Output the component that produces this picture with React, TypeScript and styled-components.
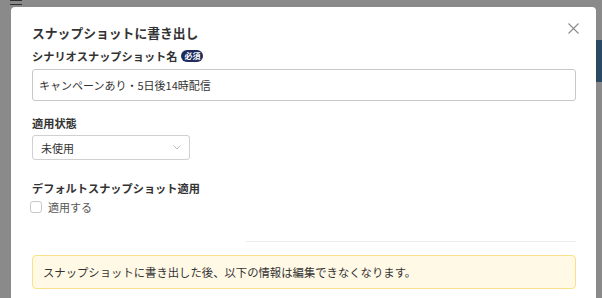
import styled, { createGlobalStyle } from "styled-components";

const GlobalStyle = createGlobalStyle`
  html, body {
    margin: 0;
    padding: 0;
    width: 100%;
    height: 100%;
    overflow: hidden;
  }
  body {
    font-family: "Noto Sans CJK JP", "Noto Sans", sans-serif;
    background: #ffffff;
    color: #333;
  }
`;

const Page = styled.div`
  width: 602px;
  height: 298px;
  display: flex;
  flex-direction: column;
  background: #ffffff;
`;

const TopBar = styled.div`
  height: 40px;
  display: flex;
  align-items: flex-start;
  padding-left: 10px;
`;

const PageRow = styled.div`
  display: flex;
  justify-content: flex-end;
`;

const PageButton = styled.div`
  width: 6px;
  height: 42px;
  background: #5187b7;
`;

const Overlay = styled.div`
  position: fixed;
  inset: 0;
  background: rgba(0, 0, 0, 0.46);
  display: flex;
  align-items: flex-start;
  padding: 7px 6px 0 11px;
`;

const Modal = styled.div`
  position: relative;
  flex: 1;
  height: 320px;
  background: #fff;
  border-radius: 4px 4px 0 0;
  padding: 16px 20px 0 21px;
  box-sizing: border-box;
  display: flex;
  flex-direction: column;
`;

const Title = styled.h2`
  margin: 0;
  font-size: 12.8px;
  line-height: 20px;
  font-weight: 700;
  color: #333;
`;

const CloseButton = styled.button`
  position: absolute;
  top: 15px;
  right: 17px;
  width: 12px;
  height: 12px;
  padding: 0;
  border: none;
  background: none;
  display: flex;
  align-items: center;
  justify-content: center;
`;

const Label = styled.div<{ $top: number }>`
  display: flex;
  align-items: center;
  gap: 4px;
  margin-top: ${(p) => p.$top}px;
  font-size: 11.2px;
  line-height: 16px;
  font-weight: 700;
  color: #333;
`;

const Badge = styled.span`
  display: inline-flex;
  align-items: center;
  justify-content: center;
  width: 22px;
  height: 12px;
  border-radius: 6px;
  background: #1c2b5c;
  color: #fff;
  font-size: 8px;
  font-weight: 700;
  line-height: 1;
`;

const TextInput = styled.div`
  margin-top: 5px;
  height: 32px;
  box-sizing: border-box;
  border: 1px solid #c9c9c9;
  border-radius: 3px;
  padding: 0 6px;
  display: flex;
  align-items: center;
  font-size: 11px;
  color: #333;
`;

const Select = styled.div`
  margin-top: 4px;
  width: 158px;
  height: 25px;
  box-sizing: border-box;
  border: 1px solid #d0d0d0;
  border-radius: 3px;
  padding: 0 8px;
  display: flex;
  align-items: center;
  justify-content: space-between;
  font-size: 11px;
  color: #333;
`;

const CheckRow = styled.label`
  margin-top: 3px;
  display: flex;
  align-items: center;
  gap: 6px;
  font-size: 11px;
  line-height: 16px;
  color: #555;
`;

const CheckBox = styled.span`
  width: 12px;
  height: 12px;
  box-sizing: border-box;
  border: 1px solid #c9c9c9;
  border-radius: 3px;
  margin-left: -2px;
`;

const Divider = styled.div`
  margin-top: 26px;
  margin-left: auto;
  width: 330px;
  height: 1px;
  background: #ececec;
`;

const Notice = styled.div`
  margin-top: 13px;
  height: 34px;
  box-sizing: border-box;
  background: #fff9e6;
  border: 1px solid #fbe08c;
  border-radius: 4px;
  padding: 0 10px;
  display: flex;
  align-items: center;
  font-size: 11.35px;
  color: #333;
`;

export default function App() {
  return (
    <>
      <GlobalStyle />
      <Page>
        <TopBar>
          <svg width="12" height="6" viewBox="0 0 12 6">
            <line x1="0" y1="0.5" x2="12" y2="0.5" stroke="#555" strokeWidth="1" />
            <line x1="0" y1="4.5" x2="12" y2="4.5" stroke="#555" strokeWidth="1" />
          </svg>
        </TopBar>
        <PageRow>
          <PageButton />
        </PageRow>
      </Page>
      <Overlay>
        <Modal>
          <Title>スナップショットに書き出し</Title>
          <CloseButton aria-label="閉じる">
            <svg width="11" height="11" viewBox="0 0 11 11">
              <path d="M0.5 0.5L10.5 10.5M10.5 0.5L0.5 10.5" stroke="#8a8a8a" strokeWidth="1.1" />
            </svg>
          </CloseButton>
          <Label $top={5}>
            シナリオスナップショット名<Badge>必須</Badge>
          </Label>
          <TextInput>キャンペーンあり・5日後14時配信</TextInput>
          <Label $top={14}>適用状態</Label>
          <Select>
            未使用
            <svg width="8" height="5" viewBox="0 0 8 5">
              <path d="M0.5 0.5L4 4L7.5 0.5" stroke="#bdbdbd" strokeWidth="1" fill="none" />
            </svg>
          </Select>
          <Label $top={20}>デフォルトスナップショット適用</Label>
          <CheckRow>
            <CheckBox />
            適用する
          </CheckRow>
          <Divider />
          <Notice>スナップショットに書き出した後、以下の情報は編集できなくなります。</Notice>
        </Modal>
      </Overlay>
    </>
  );
}
